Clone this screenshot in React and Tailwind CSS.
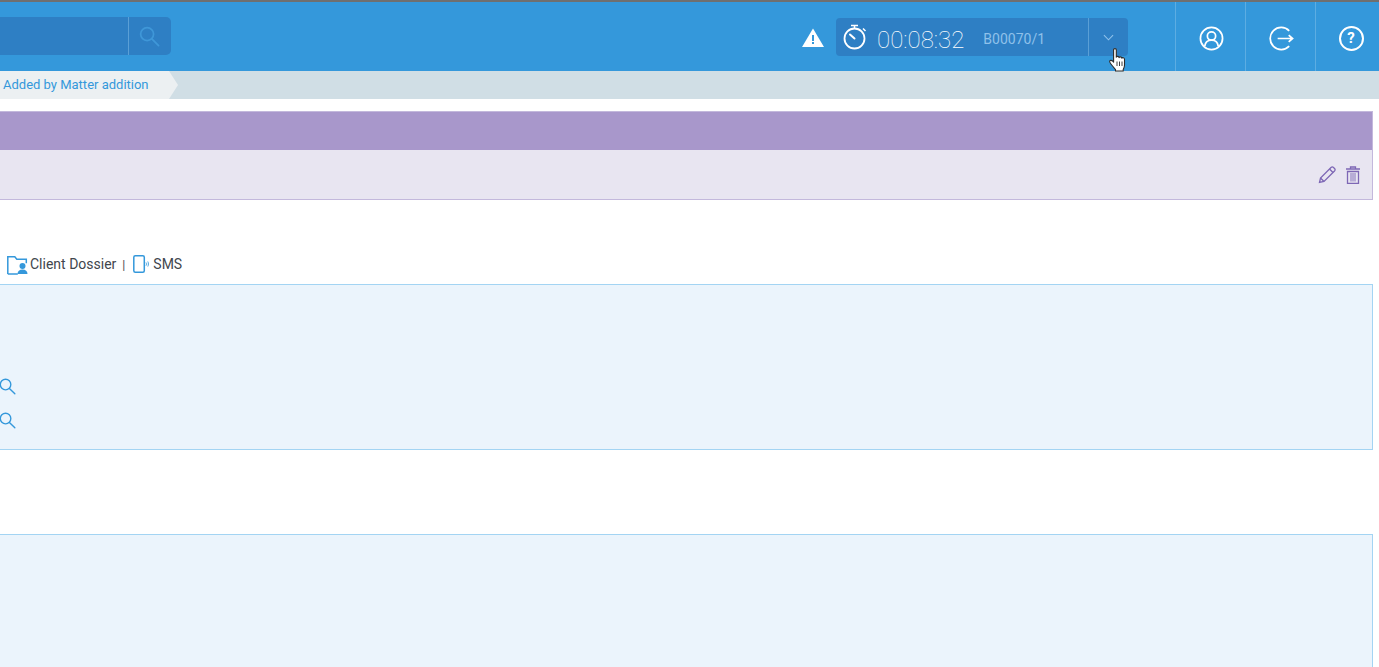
const BLUE = '#3498db'

function Search({ className, color = 'currentColor', width = 1.5 }) {
  return (
    <svg viewBox="0 0 22 22" className={className} fill="none" stroke={color} strokeWidth={width}>
      <circle cx="8.5" cy="8.5" r="6.8" />
      <path d="M13.5 13.5 20.5 20.5" strokeLinecap="round" />
    </svg>
  )
}

function NavCell({ children }) {
  return <div className="w-[70px] h-full border-l border-[#5dade2] flex items-center justify-center pt-[4px] pl-[1px] shrink-0">{children}</div>
}

function Hand() {
  return (
    <svg viewBox="0 0 18 24" className="absolute left-[273px] top-[30px] w-[18px] h-[24px]">
      <path d="M4.600 1.800c0-1.600 2.700-1.600 2.700 0V9.200c.4-1.200 2.600-1.100 2.800.4.4-1.100 2.500-1 2.700.6.5-.9 2.600-.7 2.700 1v5.800c0 2.300-.7 3.400-1.300 4.500v1.500H6.500v-1.500c-1-1.200-2.300-2.500-4.200-5-1.100-1.400-2-2.800-1.600-3.500.5-1 2.100-.8 3 .2l.9 1z" fill="#fff" stroke="#2a2a2a" strokeWidth="1.100" strokeLinejoin="round" />
      <path d="M8 13.500v4.500M10.500 13.500v4.500M13 13.500v4.500" stroke="#2a2a2a" strokeWidth=".9" />
    </svg>
  )
}

export default function App() {
  return (
    <div className="h-[667px] overflow-hidden bg-white font-['Roboto',sans-serif]">
      <header className="h-[71px] border-t-[2px] border-[#6f6f6f] bg-[#3498db] flex items-start">
        <div className="mt-[15px] w-[171px] h-[38px] bg-[#2e7fc4] rounded-r-[5px] flex justify-end shrink-0">
          <div className="w-[43px] h-full border-l border-[#5a9fd6] flex items-center justify-center">
            <Search className="w-[21px] h-[21px] mr-[1px]" color="#3f97d8" width={1.8} />
          </div>
        </div>

        <svg viewBox="0 0 22 19" className="ml-[631px] mt-[26px] w-[22px] h-[19px] shrink-0">
          <path d="M11 0.500 22 19H0z" fill="#fff" />
          <rect x="10" y="7" width="2" height="6" fill={BLUE} />
          <rect x="10" y="14" width="2" height="2" fill={BLUE} />
        </svg>

        <div className="relative ml-[12px] mt-[16px] w-[292px] h-[38px] bg-[#2e7fc4] rounded-[4px] flex items-center shrink-0">
          <svg viewBox="0 0 24 26" className="ml-[7px] w-[24px] h-[26px] shrink-0" fill="none" stroke="#fff">
            <circle cx="11.500" cy="14.500" r="10" strokeWidth="1.800" />
            <path d="M8 1.500h7M11.500 1.500v3M20 4.500l2.500 2.500" strokeWidth="1.500" />
            <path d="M11.500 14.500 7 10.500" strokeWidth="2" strokeLinecap="round" />
          </svg>
          <span className="ml-[10px] pt-[5px] text-[24px] font-thin leading-none text-white">00:08:32</span>
          <span className="ml-[19px] pt-[3px] text-[14px] leading-none text-[#8fc1ea]">B00070/1</span>
          <div className="ml-auto w-[40px] h-full border-l border-[#5a9fd6] flex items-center justify-center">
            <svg viewBox="0 0 12 7" className="w-[11px] h-[7px]" fill="none" stroke="#8fc1ea" strokeWidth="1.200">
              <path d="M1 1l5 5 5-5" />
            </svg>
          </div>
          <Hand />
        </div>

        <div className="ml-auto -mr-[6px] flex h-full">
          <NavCell>
            <svg viewBox="0 0 26 26" className="w-[25px] h-[25px]" fill="none" stroke="#fff" strokeWidth="1.800">
              <circle cx="13" cy="13" r="11.500" />
              <circle cx="13" cy="10.500" r="4.300" />
              <path d="M6 21c.5-4 3.500-6.300 7-6.300s6.500 2.300 7 6.300" />
            </svg>
          </NavCell>
          <NavCell>
            <svg viewBox="0 0 26 26" className="w-[25px] h-[25px]" fill="none" stroke="#fff" strokeWidth="1.800">
              <path d="M21 5a11.500 11.500 0 1 0 0 16" />
              <path d="M9 13h15.500M20.500 9.500 24.500 13l-4 3.500" />
            </svg>
          </NavCell>
          <NavCell>
            <div className="w-[25px] h-[25px] rounded-full border-[2px] border-white flex items-center justify-center text-white text-[15px] font-bold leading-none">?</div>
          </NavCell>
        </div>
      </header>

      <div className="h-[28px] bg-[#d0dee5] flex">
        <div className="w-[169px] h-full bg-[#ecf0f2] flex items-center pl-[3px] text-[13px] text-[#3498db]">Added by Matter addition</div>
        <div className="w-0 h-0 border-y-[14px] border-y-transparent border-l-[9px] border-l-[#ecf0f2]" />
      </div>

      <div className="mt-[12px] mr-[6px] h-[89px] border border-l-0 border-[#c3b8dc] bg-[#e8e5f1]">
        <div className="h-[38px] bg-[#a897cb]" />
        <div className="h-[50px] flex items-center justify-end gap-[10px] pr-[12px]">
          <svg viewBox="0 0 18 18" className="w-[18px] h-[18px]" fill="none" stroke="#7e67b5" strokeWidth="1.300">
            <path d="M1.500 16.500 2.500 12 13 1.500c.8-.7 1.800-.7 2.500 0l1 1c.7.700.7 1.700 0 2.500L6 15.500z" />
            <path d="M2.500 12 6 15.500M11.500 3l3.500 3.500" />
          </svg>
          <svg viewBox="0 0 14 18" className="w-[14px] h-[18px]" fill="none" stroke="#7e67b5" strokeWidth="1.300">
            <path d="M0 3h14M4.500 3V1h5v2" />
            <path d="M1.500 5.500h11V17.500h-11z" />
            <path d="M5 7v8.500M7 7v8.500M9 7v8.500" strokeWidth=".9" />
          </svg>
        </div>
      </div>

      <div className="mt-[53px] h-[22px] pl-[7px] flex items-center text-[14px] text-[#41464d]">
        <svg viewBox="0 0 22 19" className="w-[22px] h-[19px] mt-[2px] shrink-0" fill="none">
          <path d="M.8 18V.8h7l2 2.500h9.500v4" stroke="#3498db" strokeWidth="1.500" />
          <path d="M.8 18h10" stroke="#3498db" strokeWidth="1.500" />
          <circle cx="15.500" cy="10" r="3" fill="#3498db" />
          <path d="M10.500 18c0-3 2-4.500 5-4.500s5 1.500 5 4.500z" fill="#3498db" />
        </svg>
        <span className="ml-[1px]">Client Dossier</span>
        <span className="ml-[6px] pt-[2px] text-[12px] font-medium text-[#555]">|</span>
        <svg viewBox="0 0 16 18" className="ml-[8px] w-[16px] h-[18px] shrink-0" fill="none" stroke="#3498db">
          <rect x=".8" y=".8" width="10.500" height="16.400" rx="1.500" strokeWidth="1.500" />
          <path d="M13 7.500c.6 1 .6 2.200 0 3.200M14.800 6.500c.8 1.500.8 3.500 0 5" strokeWidth=".9" />
        </svg>
        <span className="ml-[4px]">SMS</span>
      </div>

      <div className="mt-[9px] mr-[6px] h-[166px] border border-l-0 border-[#a3d4f3] bg-[#ebf4fc] flex flex-col pt-[93px] gap-[17px]">
        <Search className="w-[17px] h-[17px] -ml-[1px]" color="#3498db" width={1.8} />
        <Search className="w-[17px] h-[17px] -ml-[1px]" color="#3498db" width={1.8} />
      </div>

      <div className="mt-[84px] mr-[6px] h-[140px] border border-l-0 border-b-0 border-[#a3d4f3] bg-[#ebf4fc]" />
    </div>
  )
}
